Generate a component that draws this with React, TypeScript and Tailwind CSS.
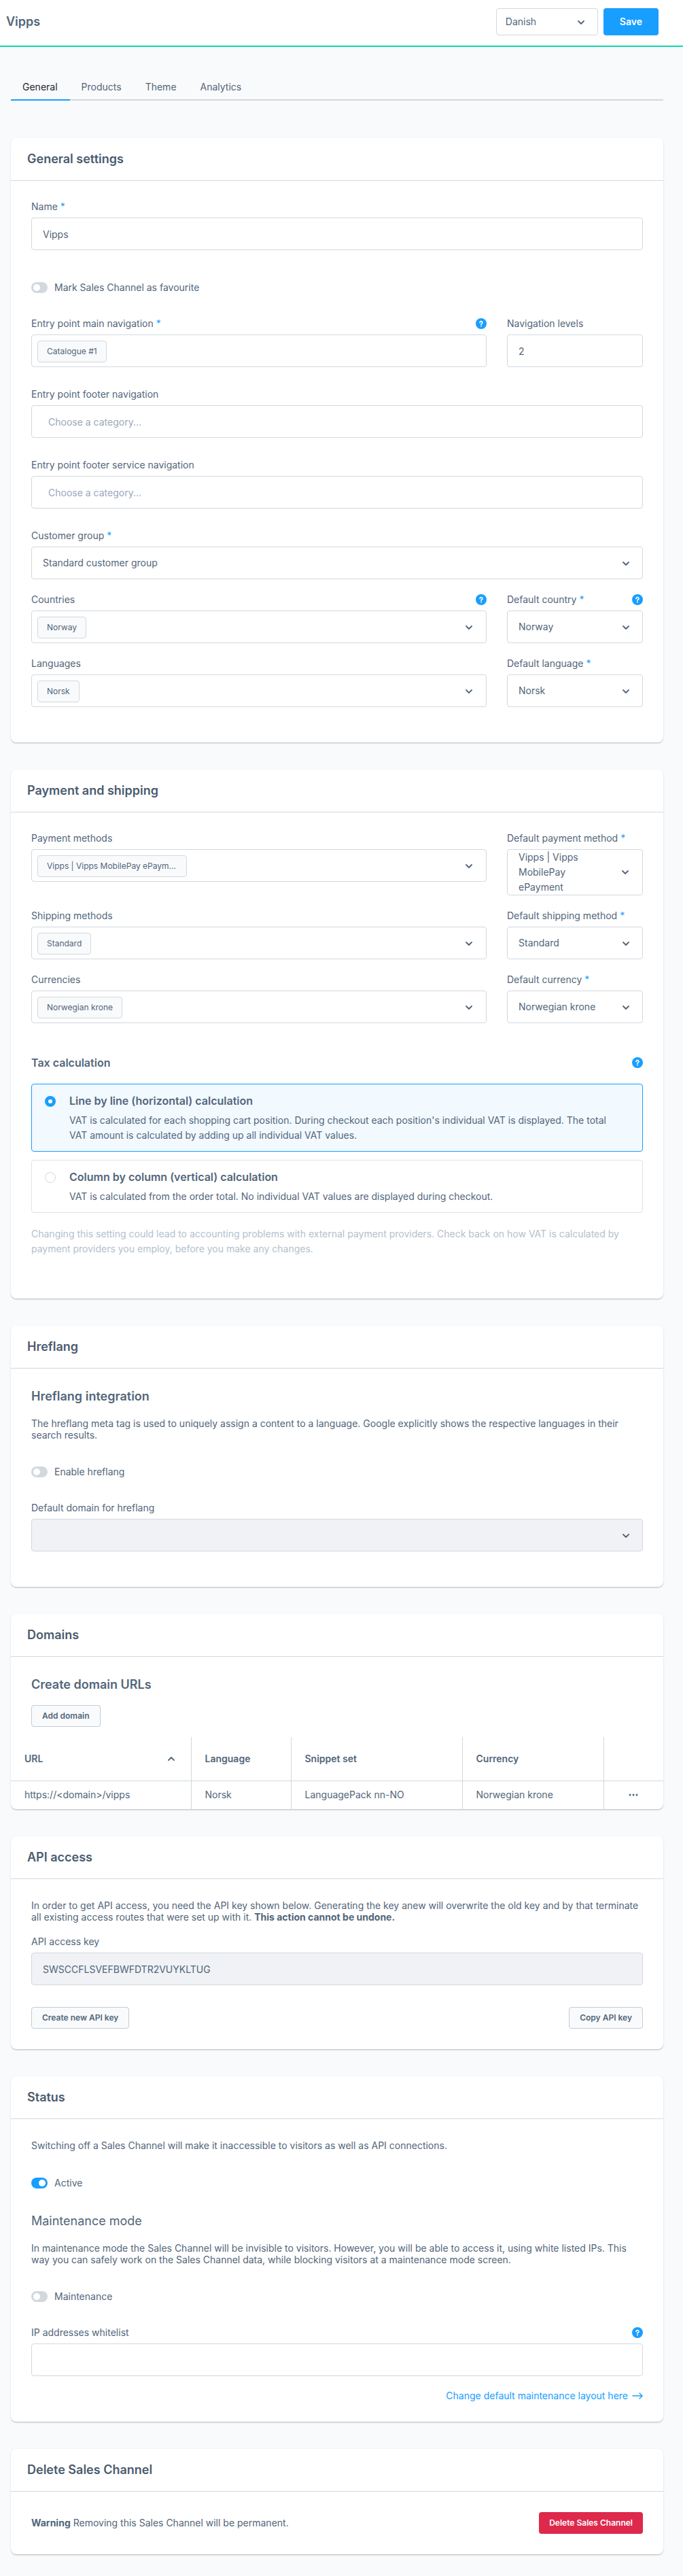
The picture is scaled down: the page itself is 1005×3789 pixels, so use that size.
import { useId, type ReactNode } from "react";

const chevronDown = "M1 1l4 4 4-4";
const chevronUp = "M1 5l4-4 4 4";

function Chevron({ up = false }: { up?: boolean }) {
  return (
    <svg aria-hidden="true" width="10" height="6" viewBox="0 0 10 6" className="shrink-0" fill="none" stroke="#52667a" strokeWidth="1.8" strokeLinecap="round" strokeLinejoin="round">
      <path d={up ? chevronUp : chevronDown} />
    </svg>
  );
}

function Help() {
  return (
    <button type="button" aria-label="Help" className="size-4 shrink-0">
      <svg width="16" height="16" viewBox="0 0 16 16" fill="none">
        <circle cx="8" cy="8" r="8" fill="#189eff" />
        <path d="M6.1 6.4a1.9 1.9 0 1 1 2.8 1.7c-.6.3-.9.6-.9 1" stroke="#fff" strokeWidth="1.7" strokeLinecap="round" />
        <circle cx="8" cy="11.4" r="1" fill="#fff" />
      </svg>
    </button>
  );
}

function Field({ id, label, required, help, children }: { id: string; label: string; required?: boolean; help?: boolean; children: ReactNode }) {
  return (
    <div className="flex flex-col gap-2">
      <div className="flex h-4 items-center justify-between">
        <label htmlFor={id} className="leading-4 whitespace-nowrap">
          {label}
          {required && <span className="ml-1 text-[#189eff]">*</span>}
        </label>
        {help && <Help />}
      </div>
      {children}
    </div>
  );
}

function TextField({ label, value = "", required, help, readOnly }: { label: string; value?: string; required?: boolean; help?: boolean; readOnly?: boolean }) {
  const id = useId();
  return (
    <Field id={id} label={label} required={required} help={help}>
      <input id={id} defaultValue={value} readOnly={readOnly} className="h-12 w-full rounded border border-[#d1d9e0] bg-white px-4 outline-none read-only:bg-[#f0f2f5]" />
    </Field>
  );
}

function SelectField({ label, value, required, help, disabled }: { label: string; value: string; required?: boolean; help?: boolean; disabled?: boolean }) {
  const id = useId();
  return (
    <Field id={id} label={label} required={required} help={help}>
      <div className="relative">
        <select id={id} disabled={disabled} className="block h-12 w-full appearance-none rounded border border-[#d1d9e0] bg-white pr-10 pl-4 outline-none disabled:bg-[#f0f2f5] disabled:opacity-100">
          <option>{value}</option>
        </select>
        <span className="pointer-events-none absolute inset-y-0 right-5 flex items-center pt-[2px]">
          <Chevron />
        </span>
      </div>
    </Field>
  );
}

function WrappingSelectField({ label, value }: { label: string; value: string }) {
  const id = useId();
  return (
    <Field id={id} label={label} required>
      <button id={id} type="button" aria-haspopup="listbox" className="flex w-full items-center justify-between rounded border border-[#d1d9e0] bg-white pr-5 pl-4 text-left leading-[22px]">
        <span className="w-[100px]">{value}</span>
        <Chevron />
      </button>
    </Field>
  );
}

function TagField({ label, tag, placeholder, required, help, chevron = true }: { label: string; tag?: string; placeholder?: string; required?: boolean; help?: boolean; chevron?: boolean }) {
  const id = useId();
  return (
    <Field id={id} label={label} required={required} help={help}>
      <div className="flex h-12 items-center rounded border border-[#d1d9e0] bg-white pt-[2px] pr-5 pl-2">
        {tag && (
          <span className="h-8 max-w-[220px] shrink-0 truncate rounded-sm border border-[#d1d9e0] bg-[#f9fafb] px-[13px] text-xs leading-[30px]">{tag}</span>
        )}
        <input id={id} placeholder={placeholder} className="h-8 min-w-0 flex-1 px-4 pb-[2px] outline-none placeholder:text-[#98a9bc]" />
        {chevron && <Chevron />}
      </div>
    </Field>
  );
}

function Toggle({ label, on = false }: { label: string; on?: boolean }) {
  return (
    <label className="flex h-4 items-center gap-[10px]">
      <input type="checkbox" role="switch" defaultChecked={on} className="peer sr-only" />
      <span className="flex h-4 w-6 items-center rounded-full bg-[#d1d9e0] px-[3px] peer-checked:justify-end peer-checked:bg-[#189eff]">
        <span className="size-[10px] rounded-full bg-white" />
      </span>
      {label}
    </label>
  );
}

function Card({ title, children }: { title: string; children: ReactNode }) {
  return (
    <section className="overflow-hidden rounded-lg bg-white shadow-[0_1px_1px_rgba(0,0,0,0.08),0_2px_1px_rgba(0,0,0,0.06),0_1px_3px_rgba(0,0,0,0.1)]">
      <h2 className="border-b border-[#d1d9e0] px-6 py-[19px] text-lg leading-6 font-semibold text-[#4a5b6e]">{title}</h2>
      {children}
    </section>
  );
}

function SmallButton({ children }: { children: ReactNode }) {
  return (
    <button type="button" className="h-8 rounded border border-[#c2ccd6] bg-[#f9fafb] px-[15px] text-xs font-semibold">
      {children}
    </button>
  );
}

function TaxOption({ title, text, checked = false }: { title: string; text: string; checked?: boolean }) {
  return (
    <label className="flex gap-5 rounded border border-[#dde3e9] pt-[13px] pr-10 pb-3 pl-[19px] has-checked:border-[#189eff] has-checked:bg-[#f2f9ff]">
      <input type="radio" name="tax" defaultChecked={checked} className="mt-1 size-4 shrink-0 appearance-none rounded-full border border-[#d1d9e0] bg-white checked:border-[5px] checked:border-[#189eff]" />
      <span className="flex flex-col gap-[7px]">
        <span className="text-base leading-[22px] font-semibold">{title}</span>
        <span className="leading-[22px]">{text}</span>
      </span>
    </label>
  );
}

const pair = "grid grid-cols-[1fr_200px] items-start gap-[30px]";
const tab = "pt-2 pr-[18px] pl-[17px] leading-[22px]";
const th = "border-r border-[#d1d9e0] px-5 text-left font-semibold last:border-r-0";
const td = "border-r border-[#d1d9e0] px-5 last:border-r-0";

export default function App() {
  return (
    <div className="bg-[#f9fafb] pb-8 font-['Inter',sans-serif] text-sm text-[#52667a]">
      <header className="flex items-start justify-between border-b-2 border-[#12d8a8] bg-white pt-3 pr-9 pb-[15px] pl-[9px]">
        <h1 className="text-lg leading-10 font-semibold">Vipps</h1>
        <div className="flex gap-2">
          <div className="relative">
            <select aria-label="Language" className="block h-10 w-[150px] appearance-none rounded border border-[#d1d9e0] bg-white px-[13px] outline-none">
              <option>Danish</option>
            </select>
            <span className="pointer-events-none absolute inset-y-0 right-5 flex items-center pt-[2px]">
              <Chevron />
            </span>
          </div>
          <button type="button" className="h-10 rounded bg-[#189eff] px-6 font-semibold text-white">Save</button>
        </div>
      </header>

      <main className="pt-10 pr-[29px] pl-4">
        <nav className="flex border-b-2 border-[#d1d9e0]">
          <a href="#general" className="-mb-[2px] border-b-2 border-[#189eff] pt-2 pr-[18px] pb-[7px] pl-[17px] leading-[22px] text-[#1c2731]">General</a>
          <a href="#products" className={tab}>Products</a>
          <a href="#theme" className={tab}>Theme</a>
          <a href="#analytics" className={tab}>Analytics</a>
        </nav>

        <div className="mt-[55px] flex flex-col gap-10">
          <Card title="General settings">
            <div className="flex flex-col gap-8 px-[30px] pt-[30px] pb-[52px]">
              <TextField label="Name" value="Vipps" required />
              <div className="pt-[15px] pb-[5px]">
                <Toggle label="Mark Sales Channel as favourite" />
              </div>
              <div className={pair}>
                <TagField label="Entry point main navigation" tag="Catalogue #1" required help chevron={false} />
                <TextField label="Navigation levels" value="2" />
              </div>
              <TagField label="Entry point footer navigation" placeholder="Choose a category..." chevron={false} />
              <TagField label="Entry point footer service navigation" placeholder="Choose a category..." chevron={false} />
              <div className="flex flex-col gap-[22px]">
                <SelectField label="Customer group" value="Standard customer group" required />
                <div className={pair}>
                  <TagField label="Countries" tag="Norway" help />
                  <SelectField label="Default country" value="Norway" required help />
                </div>
                <div className={pair}>
                  <TagField label="Languages" tag="Norsk" />
                  <SelectField label="Default language" value="Norsk" required />
                </div>
              </div>
            </div>
          </Card>

          <Card title="Payment and shipping">
            <div className="px-[30px] pt-[30px] pb-[62px]">
              <div className="flex flex-col gap-[22px]">
                <div className={pair}>
                  <TagField label="Payment methods" tag="Vipps | Vipps MobilePay ePayment" />
                  <WrappingSelectField label="Default payment method" value="Vipps | Vipps MobilePay ePayment" />
                </div>
                <div className={pair}>
                  <TagField label="Shipping methods" tag="Standard" />
                  <SelectField label="Default shipping method" value="Standard" required />
                </div>
                <div className={pair}>
                  <TagField label="Currencies" tag="Norwegian krone" />
                  <SelectField label="Default currency" value="Norwegian krone" required />
                </div>
              </div>
              <div className="mt-[50px] flex items-center justify-between">
                <h3 className="text-base leading-4 font-semibold">Tax calculation</h3>
                <Help />
              </div>
              <div className="mt-[23px] flex flex-col gap-3">
                <TaxOption checked title="Line by line (horizontal) calculation" text="VAT is calculated for each shopping cart position. During checkout each position's individual VAT is displayed. The total VAT amount is calculated by adding up all individual VAT values." />
                <TaxOption title="Column by column (vertical) calculation" text="VAT is calculated from the order total. No individual VAT values are displayed during checkout." />
              </div>
              <p className="mt-5 leading-[22px] text-[#b3bfcc]">
                Changing this setting could lead to accounting problems with external payment providers. Check back on how VAT is calculated by payment providers you employ, before you make any changes.
              </p>
            </div>
          </Card>

          <Card title="Hreflang">
            <div className="px-[30px] pt-[30px] pb-[52px]">
              <h3 className="text-lg leading-[22px] font-semibold">Hreflang integration</h3>
              <p className="mt-5 leading-[17px]">
                The hreflang meta tag is used to uniquely assign a content to a language. Google explicitly shows the respective languages in their search results.
              </p>
              <div className="mt-[38px] mb-[37px]">
                <Toggle label="Enable hreflang" />
              </div>
              <SelectField label="Default domain for hreflang" value="" disabled />
            </div>
          </Card>

          <Card title="Domains">
            <div className="px-[30px] pt-[30px] pb-[15px]">
              <h3 className="text-lg leading-[22px] font-semibold">Create domain URLs</h3>
              <div className="mt-[19px] flex">
                <SmallButton>Add domain</SmallButton>
              </div>
            </div>
            <table className="w-full table-fixed border-collapse">
              <colgroup>
                <col />
                <col className="w-[147px]" />
                <col className="w-[252px]" />
                <col className="w-[208px]" />
                <col className="w-[88px]" />
              </colgroup>
              <thead>
                <tr className="h-16 border-b border-[#d1d9e0]">
                  <th className={th}>
                    <button type="button" className="flex w-full items-center justify-between pr-1 font-semibold">
                      URL
                      <Chevron up />
                    </button>
                  </th>
                  <th className={th}>Language</th>
                  <th className={th}>Snippet set</th>
                  <th className={th}>Currency</th>
                  <th className={th} aria-label="Actions" />
                </tr>
              </thead>
              <tbody>
                <tr className="h-[42px]">
                  <td className={td}>https://&lt;domain&gt;/vipps</td>
                  <td className={td}>Norsk</td>
                  <td className={td}>LanguagePack nn-NO</td>
                  <td className={td}>Norwegian krone</td>
                  <td className={td}>
                    <button type="button" aria-label="Row actions" className="mx-auto block">
                      <svg width="14" height="4" viewBox="0 0 14 4" fill="#52667a">
                        <circle cx="2" cy="2" r="1.5" />
                        <circle cx="7" cy="2" r="1.5" />
                        <circle cx="12" cy="2" r="1.5" />
                      </svg>
                    </button>
                  </td>
                </tr>
              </tbody>
            </table>
          </Card>

          <Card title="API access">
            <div className="p-[30px]">
              <p className="mb-[20px] leading-[17px]">
                In order to get API access, you need the API key shown below. Generating the key anew will overwrite the old key and by that terminate all existing access routes that were set up with it. <strong className="font-bold">This action cannot be undone.</strong>
              </p>
              <TextField label="API access key" value="SWSCCFLSVEFBWFDTR2VUYKLTUG" readOnly />
              <div className="mt-8 flex justify-between">
                <SmallButton>Create new API key</SmallButton>
                <SmallButton>Copy API key</SmallButton>
              </div>
            </div>
          </Card>

          <Card title="Status">
            <div className="p-[30px]">
              <p className="leading-[17px]">Switching off a Sales Channel will make it inaccessible to visitors as well as API connections.</p>
              <div className="mt-[39px] mb-[37px]">
                <Toggle label="Active" on />
              </div>
              <h3 className="text-lg leading-[22px]">Maintenance mode</h3>
              <p className="mt-5 leading-[17px]">
                In maintenance mode the Sales Channel will be invisible to visitors. However, you will be able to access it, using white listed IPs. This way you can safely work on the Sales Channel data, while blocking visitors at a maintenance mode screen.
              </p>
              <div className="mt-[38px] mb-[37px]">
                <Toggle label="Maintenance" />
              </div>
              <TextField label="IP addresses whitelist" help />
              <div className="mt-5 flex justify-end">
                <a href="#layout" className="flex items-center gap-[6px] leading-[17px] text-[#189eff]">
                  Change default maintenance layout here
                  <svg aria-hidden="true" width="16" height="10" viewBox="0 0 16 10" fill="none" stroke="#189eff" strokeWidth="1.4" strokeLinecap="round" strokeLinejoin="round">
                    <path d="M1 5h14M11 1l4 4-4 4" />
                  </svg>
                </a>
              </div>
            </div>
          </Card>

          <Card title="Delete Sales Channel">
            <div className="flex items-center justify-between p-[30px]">
              <p>
                <strong className="font-bold">Warning</strong> Removing this Sales Channel will be permanent.
              </p>
              <button type="button" className="h-8 rounded bg-[#de294c] px-[15px] text-xs font-semibold text-white">Delete Sales Channel</button>
            </div>
          </Card>
        </div>
      </main>
    </div>
  );
}
